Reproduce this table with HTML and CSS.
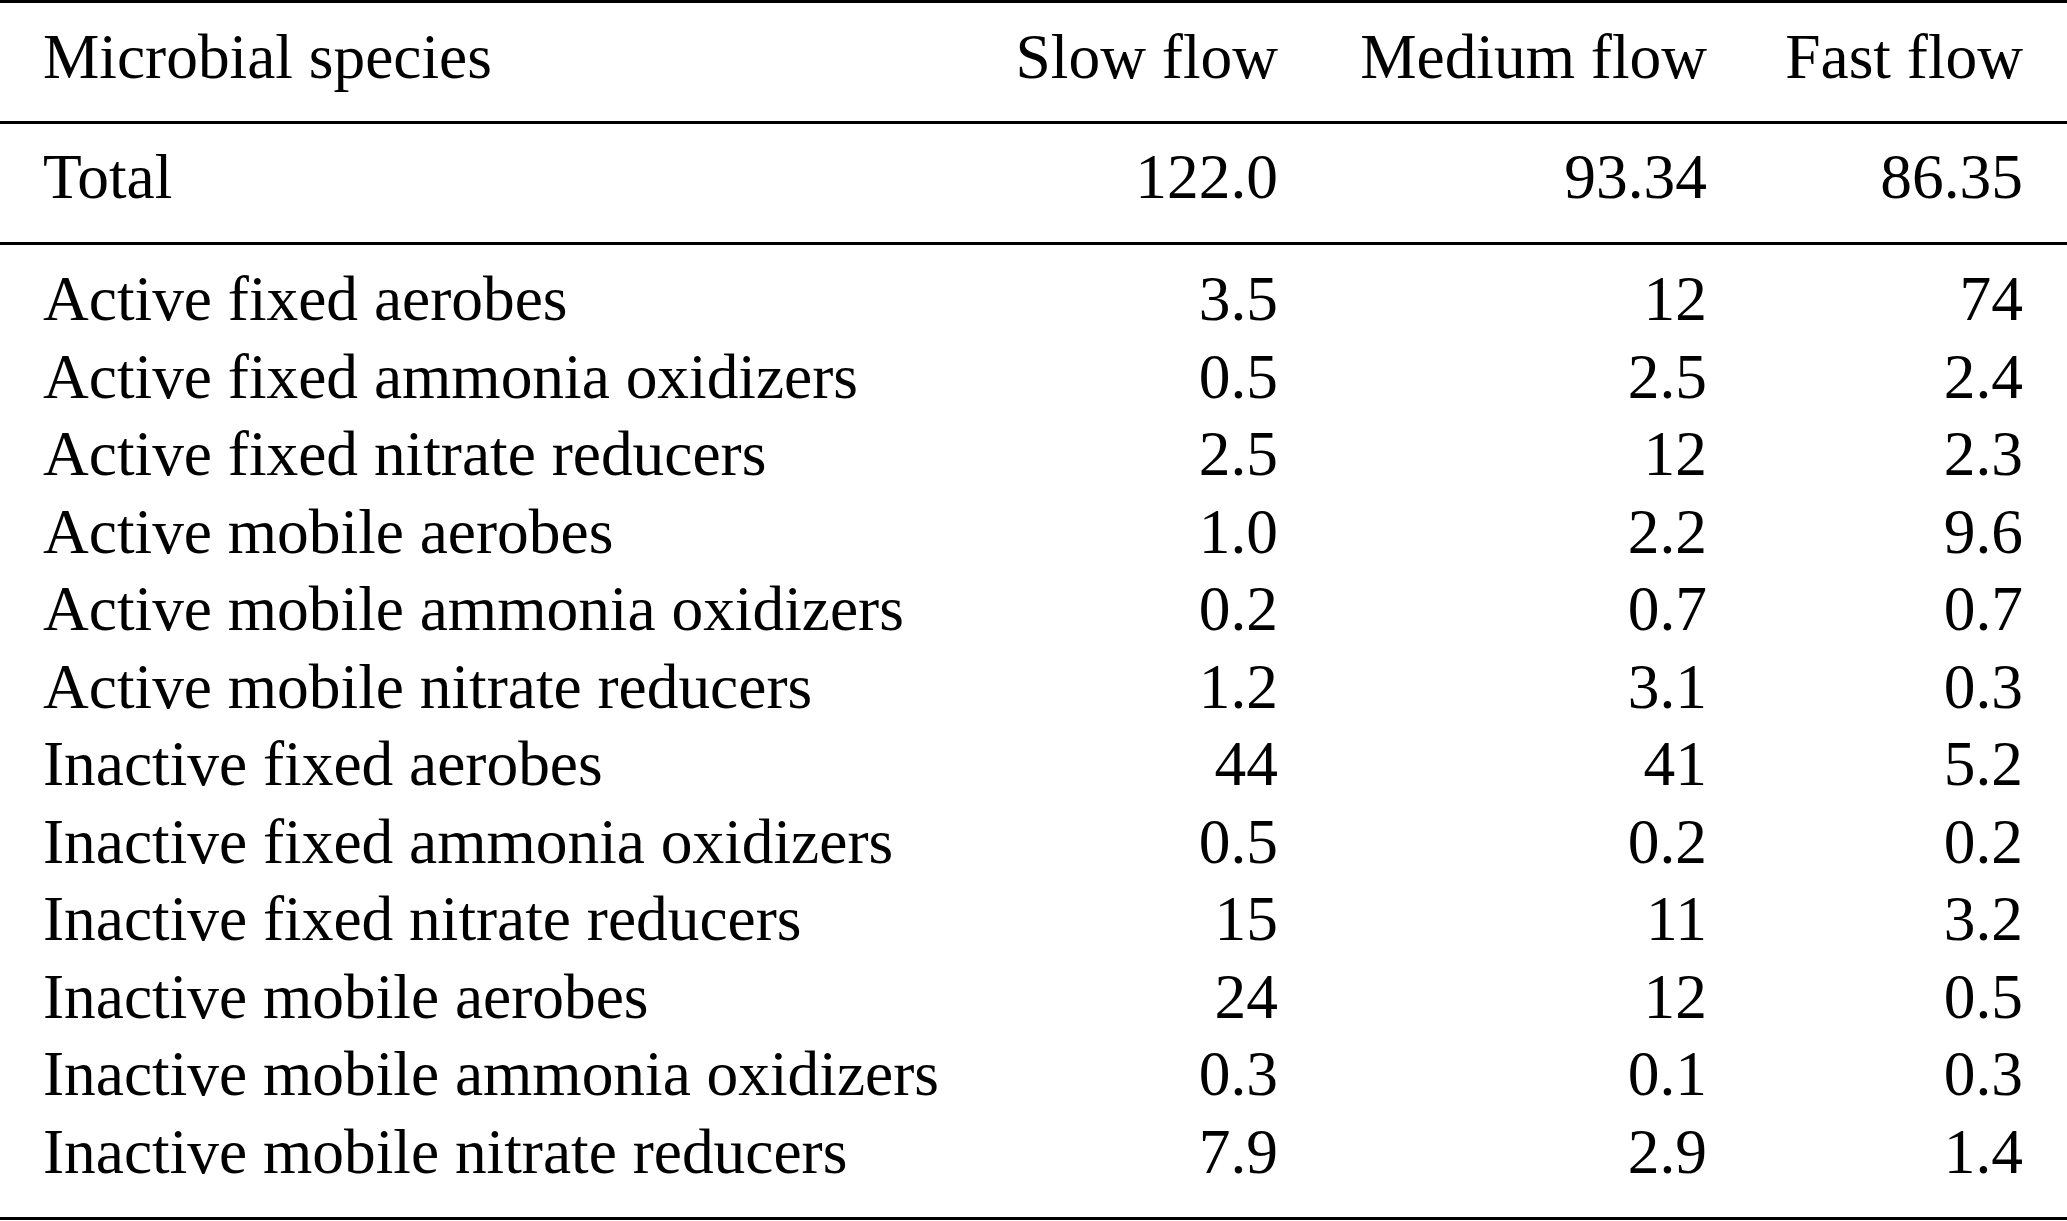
FILE: index.html
```html
<!DOCTYPE html>
<html lang="en">
<head>
<meta charset="utf-8">
<title>Microbial species table</title>
<link rel="stylesheet" href="styles.css">
</head>
<body>
<div class="tbl">
  <div class="sec head">
    <div class="row"><div class="name">Microbial species</div><div class="num">Slow flow</div><div class="num">Medium flow</div><div class="num">Fast flow</div></div>
  </div>
  <div class="sec total">
    <div class="row"><div class="name">Total</div><div class="num">122.0</div><div class="num">93.34</div><div class="num">86.35</div></div>
  </div>
  <div class="sec body">
    <div class="row"><div class="name">Active fixed aerobes</div><div class="num">3.5</div><div class="num">12</div><div class="num">74</div></div>
    <div class="row"><div class="name">Active fixed ammonia oxidizers</div><div class="num">0.5</div><div class="num">2.5</div><div class="num">2.4</div></div>
    <div class="row"><div class="name">Active fixed nitrate reducers</div><div class="num">2.5</div><div class="num">12</div><div class="num">2.3</div></div>
    <div class="row"><div class="name">Active mobile aerobes</div><div class="num">1.0</div><div class="num">2.2</div><div class="num">9.6</div></div>
    <div class="row"><div class="name">Active mobile ammonia oxidizers</div><div class="num">0.2</div><div class="num">0.7</div><div class="num">0.7</div></div>
    <div class="row"><div class="name">Active mobile nitrate reducers</div><div class="num">1.2</div><div class="num">3.1</div><div class="num">0.3</div></div>
    <div class="row"><div class="name">Inactive fixed aerobes</div><div class="num">44</div><div class="num">41</div><div class="num">5.2</div></div>
    <div class="row"><div class="name">Inactive fixed ammonia oxidizers</div><div class="num">0.5</div><div class="num">0.2</div><div class="num">0.2</div></div>
    <div class="row"><div class="name">Inactive fixed nitrate reducers</div><div class="num">15</div><div class="num">11</div><div class="num">3.2</div></div>
    <div class="row"><div class="name">Inactive mobile aerobes</div><div class="num">24</div><div class="num">12</div><div class="num">0.5</div></div>
    <div class="row"><div class="name">Inactive mobile ammonia oxidizers</div><div class="num">0.3</div><div class="num">0.1</div><div class="num">0.3</div></div>
    <div class="row"><div class="name">Inactive mobile nitrate reducers</div><div class="num">7.9</div><div class="num">2.9</div><div class="num">1.4</div></div>
  </div>
</div>
</body>
</html>
```
FILE: styles.css
```css
html, body {
  margin: 0;
  padding: 0;
  background: #ffffff;
}

.tbl {
  width: 2067px;
  font-family: "Liberation Serif", "Times New Roman", serif;
  font-size: 63.4px;
  line-height: 77.5px;
  color: #000000;
  border-top: 3px solid #000000;
  border-bottom: 3px solid #000000;
}

.sec {
  display: flex;
  flex-direction: column;
}

.head {
  padding-top: 15.7px;
  padding-bottom: 24.8px;
  border-bottom: 3px solid #000000;
}

.total {
  padding-top: 14.7px;
  padding-bottom: 25.8px;
  border-bottom: 3px solid #000000;
}

.body {
  padding-top: 16.5px;
  padding-bottom: 25.5px;
}

.row {
  display: grid;
  grid-template-columns: 1fr 300px 429px 316px;
  padding-left: 43px;
  padding-right: 44px;
}

.name {
  white-space: nowrap;
}

.num {
  text-align: right;
  white-space: nowrap;
}
```
